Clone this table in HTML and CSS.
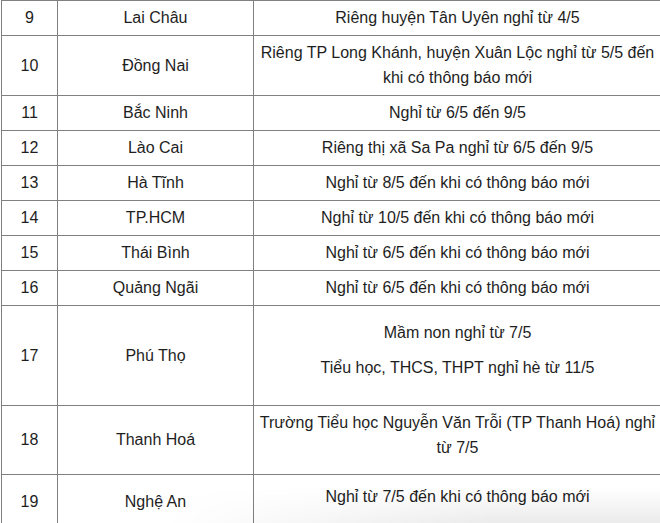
FILE: index.html
```html
<!DOCTYPE html>
<html lang="vi">
<head>
<meta charset="utf-8">
<title>Lịch nghỉ học</title>
<link rel="stylesheet" href="styles.css">
</head>
<body>
<table class="schedule">
  <colgroup>
    <col class="c-no">
    <col class="c-prov">
    <col class="c-note">
  </colgroup>
  <tbody>
    <tr><td>9</td><td>Lai Châu</td><td class="note">Riêng huyện Tân Uyên nghỉ từ 4/5</td></tr>
    <tr><td>10</td><td>Đồng Nai</td><td class="note">Riêng TP Long Khánh, huyện Xuân Lộc nghỉ từ 5/5 đến khi có thông báo mới</td></tr>
    <tr><td>11</td><td>Bắc Ninh</td><td class="note">Nghỉ từ 6/5 đến 9/5</td></tr>
    <tr><td>12</td><td>Lào Cai</td><td class="note">Riêng thị xã Sa Pa nghỉ từ 6/5 đến 9/5</td></tr>
    <tr><td>13</td><td>Hà Tĩnh</td><td class="note">Nghỉ từ 8/5 đến khi có thông báo mới</td></tr>
    <tr><td>14</td><td>TP.HCM</td><td class="note">Nghỉ từ 10/5 đến khi có thông báo mới</td></tr>
    <tr><td>15</td><td>Thái Bình</td><td class="note">Nghỉ từ 6/5 đến khi có thông báo mới</td></tr>
    <tr><td>16</td><td>Quảng Ngãi</td><td class="note">Nghỉ từ 6/5 đến khi có thông báo mới</td></tr>
    <tr><td>17</td><td>Phú Thọ</td><td class="note multi"><p>Mầm non nghỉ từ 7/5</p><p>Tiểu học, THCS, THPT nghỉ hè từ 11/5</p></td></tr>
    <tr><td>18</td><td>Thanh Hoá</td><td class="note tall">Trường Tiểu học Nguyễn Văn Trỗi (TP Thanh Hoá) nghỉ từ 7/5</td></tr>
    <tr><td>19</td><td>Nghệ An</td><td class="note last">Nghỉ từ 7/5 đến khi có thông báo mới</td></tr>
  </tbody>
</table>
<div class="fade"></div>
</body>
</html>
```
FILE: styles.css
```css
html, body {
  margin: 0;
  padding: 0;
  background: #ffffff;
  overflow: hidden;
}

body {
  font-family: "Liberation Sans", Arial, Helvetica, sans-serif;
  font-size: 16px;
  color: #1e1e1e;
}

.schedule {
  border-collapse: collapse;
  table-layout: fixed;
  width: 660px;
  margin: 0 0 0 1px;
}

.c-no { width: 56px; }
.c-prov { width: 196px; }
.c-note { width: 408px; }

.schedule td {
  border: 1px solid #808080;
  padding: 4px 6px 5px;
  line-height: 25px;
  text-align: center;
  vertical-align: middle;
}

.schedule td.note {
  padding-left: 1px;
  padding-right: 1px;
}

.schedule td.multi {
  padding-bottom: 15px;
}

.schedule td.multi p {
  margin: 10px 0;
}

.schedule td.tall {
  padding-bottom: 14px;
}

.schedule td.last {
  padding-top: 9px;
  padding-bottom: 20px;
}

.fade {
  position: fixed;
  left: 0;
  right: 0;
  bottom: 0;
  height: 36px;
  pointer-events: none;
  background: linear-gradient(to bottom, rgba(0, 0, 0, 0), rgba(0, 0, 0, 0.08));
  -webkit-mask-image: linear-gradient(to right, transparent 25%, #000 75%);
  mask-image: linear-gradient(to right, transparent 25%, #000 75%);
}
```
